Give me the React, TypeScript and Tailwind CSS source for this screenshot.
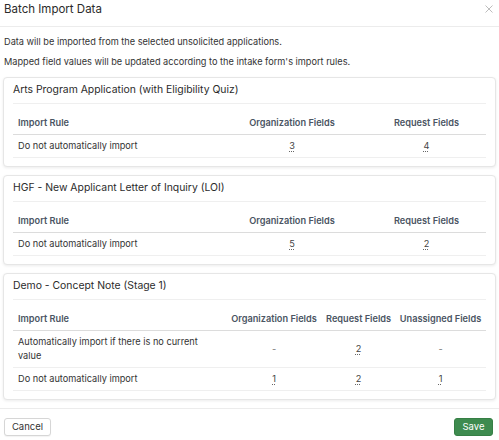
import React from "react";

type Col = { label: string; w: string; align: "left" | "center" };
type Section = {
  title: string;
  cols: Col[];
  rows: string[][];
};

const sections: Section[] = [
  {
    title: "Arts Program Application (with Eligibility Quiz)",
    cols: [
      { label: "Import Rule", w: "w-[204px]", align: "left" },
      { label: "Organization Fields", w: "w-[150px]", align: "center" },
      { label: "Request Fields", w: "flex-1", align: "center" },
    ],
    rows: [["Do not automatically import", "3", "4"]],
  },
  {
    title: "HGF - New Applicant Letter of Inquiry (LOI)",
    cols: [
      { label: "Import Rule", w: "w-[204px]", align: "left" },
      { label: "Organization Fields", w: "w-[150px]", align: "center" },
      { label: "Request Fields", w: "flex-1", align: "center" },
    ],
    rows: [["Do not automatically import", "5", "2"]],
  },
  {
    title: "Demo - Concept Note (Stage 1)",
    cols: [
      { label: "Import Rule", w: "w-[213px]", align: "left" },
      { label: "Organization Fields", w: "w-[96px]", align: "center" },
      { label: "Request Fields", w: "w-[73px]", align: "center" },
      { label: "Unassigned Fields", w: "flex-1", align: "center" },
    ],
    rows: [
      ["Automatically import if there is no current value", "-", "2", "-"],
      ["Do not automatically import", "1", "2", "1"],
    ],
  },
];

function Cell({ col, children, header, idx }: { col: Col; children: React.ReactNode; header?: boolean; idx: number }) {
  return (
    <div
      className={`${col.w} shrink-0 px-[4px] ${col.align === "center" ? "text-center" : "text-left"} ${
        header ? "whitespace-nowrap font-semibold text-[#4b5563]" : "text-[#333]"
      } ${idx === 0 && !header ? "pl-[5px] pr-[20px]" : ""} ${idx === 0 && header ? "pl-[5px]" : ""}`}
    >
      {children}
    </div>
  );
}

function Card({ s }: { s: Section }) {
  return (
    <div className="rounded-[4px] border border-[#e6e6e6] bg-white px-[9px] pb-[8px] pt-[5px] shadow-[0_1px_3px_rgba(0,0,0,0.08)]">
      <div className="border-b border-[#efefef] pb-[6px] text-[10.4px] leading-[14px] text-[#2b2b2b]">{s.title}</div>
      <div className="mt-[8px] text-[9.2px] leading-[14px]">
        <div className="flex items-center border-b border-[#dcdcdc] py-[4px]">
          {s.cols.map((c, i) => (
            <Cell key={i} col={c} header idx={i}>
              {c.label}
            </Cell>
          ))}
        </div>
        {s.rows.map((r, ri) => (
          <div key={ri} className="flex items-center border-b border-[#efefef] py-[4px]">
            {r.map((v, i) => (
              <Cell key={i} col={s.cols[i]} idx={i}>
                {i === 0 || v === "-" ? (
                  <span className={v === "-" ? "text-[#777]" : ""}>{v}</span>
                ) : (
                  <span className="text-[#444] underline decoration-dotted decoration-[#666] underline-offset-2">{v}</span>
                )}
              </Cell>
            ))}
          </div>
        ))}
      </div>
    </div>
  );
}

export default function App() {
  return (
    <div className="h-[440px] w-[499px] overflow-hidden bg-white font-['Inter','Noto_Sans',sans-serif] text-[#333]">
      <div className="flex h-[27px] items-start justify-between border-b border-[#ececec] px-[4px] pt-[2px]">
        <div className="text-[11.5px] leading-[14px] text-[#2b2b2b]">Batch Import Data</div>
        <svg width="8" height="8" viewBox="0 0 8 8" className="mr-[2px] mt-[3px]">
          <path d="M0.5 0.5 L7.5 7.5 M7.5 0.5 L0.5 7.5" stroke="#b5b5b5" strokeWidth="0.9" />
        </svg>
      </div>
      <div className="px-[3px]">
        <div className="mt-[8px] px-[1px] text-[9.2px] leading-[14px] text-[#333]">
          Data will be imported from the selected unsolicited applications.
        </div>
        <div className="mt-[6px] px-[1px] text-[9.2px] leading-[14px] text-[#333]">
          Mapped field values will be updated according to the intake form's import rules.
        </div>
        <div className="mt-[8px] flex flex-col gap-[8px]">
          {sections.map((s, i) => (
            <Card key={i} s={s} />
          ))}
        </div>
      </div>
      <div className="mt-[8px] flex items-center justify-between border-t border-[#ececec] px-[4px] pt-[9px]">
        <button className="h-[18px] w-[47px] rounded-[3px] border border-[#d6d6d6] bg-white text-[9.5px] text-[#333] shadow-[0_1px_1px_rgba(0,0,0,0.05)]">
          Cancel
        </button>
        <button className="mr-[2px] h-[18px] w-[39px] rounded-[3px] border border-[#367f45] bg-[#3e8b4f] text-[9.5px] text-white">
          Save
        </button>
      </div>
    </div>
  );
}
